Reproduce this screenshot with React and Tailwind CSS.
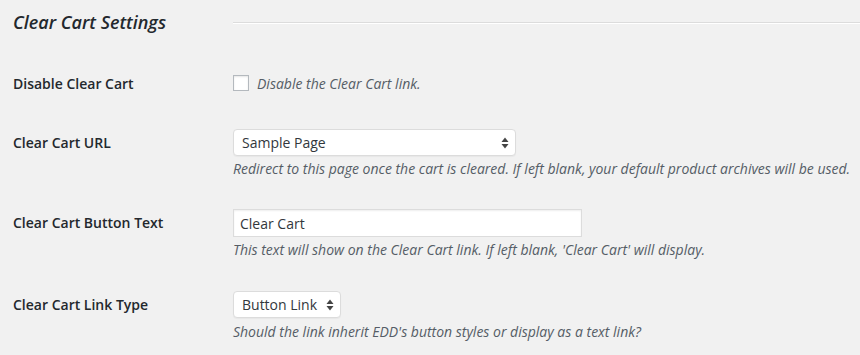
function SelectArrows() {
  return (
    <svg width="8" height="12" viewBox="0 0 8 12" className="pointer-events-none absolute right-[7px] top-1/2 -translate-y-1/2">
      <path d="M4 0.5 L7.5 5 L0.5 5 Z" fill="#444" />
      <path d="M4 11.5 L7.5 7 L0.5 7 Z" fill="#444" />
    </svg>
  );
}

function FakeSelect({ value, width }) {
  return (
    <div className={`relative ${width}`}>
      <select
        defaultValue={value}
        className="h-[27px] w-full appearance-none rounded-[4px] border border-[#dcdcdc] bg-white pl-[8px] pr-[16px] text-[14px] text-[#32373c] shadow-[0_1px_1px_rgba(0,0,0,0.04)] outline-none"
      >
        <option>{value}</option>
      </select>
      <SelectArrows />
    </div>
  );
}

function Row({ label, children, className = "" }) {
  return (
    <div className={`flex items-start ${className}`}>
      <div className="flex h-[27px] w-[220px] shrink-0 items-center text-[14px] font-semibold text-[#23282d]">
        {label}
      </div>
      <div className="flex flex-col">{children}</div>
    </div>
  );
}

function Description({ children, className = "" }) {
  return <p className={`text-[14px] leading-[20px] italic text-[#555d66] ${className}`}>{children}</p>;
}

export default function App() {
  return (
    <div
      className="h-[355px] w-[860px] overflow-hidden bg-[#f1f1f1] pl-[13px]"
      style={{ fontFamily: '"Open Sans", "Noto Sans", sans-serif' }}
    >
      <div className="flex h-[44px] items-center">
        <h2 className="w-[220px] shrink-0 text-[18px] font-semibold italic text-[#23282d]">Clear Cart Settings</h2>
        <div className="mt-[1px] h-0 flex-1 border-t border-b border-t-[#dcdcdc] border-b-white" />
      </div>

      <div className="mt-[27px] flex items-center">
        <div className="flex h-[24px] w-[220px] shrink-0 items-center text-[14px] font-semibold text-[#23282d]">
          Disable Clear Cart
        </div>
        <label className="flex items-center gap-[8px]">
          <input
            type="checkbox"
            className="h-[16px] w-[16px] appearance-none border border-[#b4b9be] bg-white shadow-[inset_0_1px_2px_rgba(0,0,0,0.1)]"
          />
          <span className="text-[14px] italic text-[#555d66]">Disable the Clear Cart link.</span>
        </label>
      </div>

      <Row label="Clear Cart URL" className="mt-[34px]">
        <FakeSelect value="Sample Page" width="w-[283px]" />
        <Description className="mt-[3px]">
          Redirect to this page once the cart is cleared. If left blank, your default product archives will be used.
        </Description>
      </Row>

      <Row label="Clear Cart Button Text" className="mt-[30px]">
        <input
          type="text"
          defaultValue="Clear Cart"
          className="h-[28px] w-[349px] border border-[#dcdcdc] bg-white px-[6px] text-[14px] text-[#32373c] shadow-[inset_0_1px_2px_rgba(0,0,0,0.07)] outline-none"
        />
        <Description className="mt-[3px]">
          This text will show on the Clear Cart link. If left blank, 'Clear Cart' will display.
        </Description>
      </Row>

      <Row label="Clear Cart Link Type" className="mt-[31px]">
        <FakeSelect value="Button Link" width="w-[108px]" />
        <Description className="mt-[4px]">Should the link inherit EDD's button styles or display as a text link?</Description>
      </Row>
    </div>
  );
}
